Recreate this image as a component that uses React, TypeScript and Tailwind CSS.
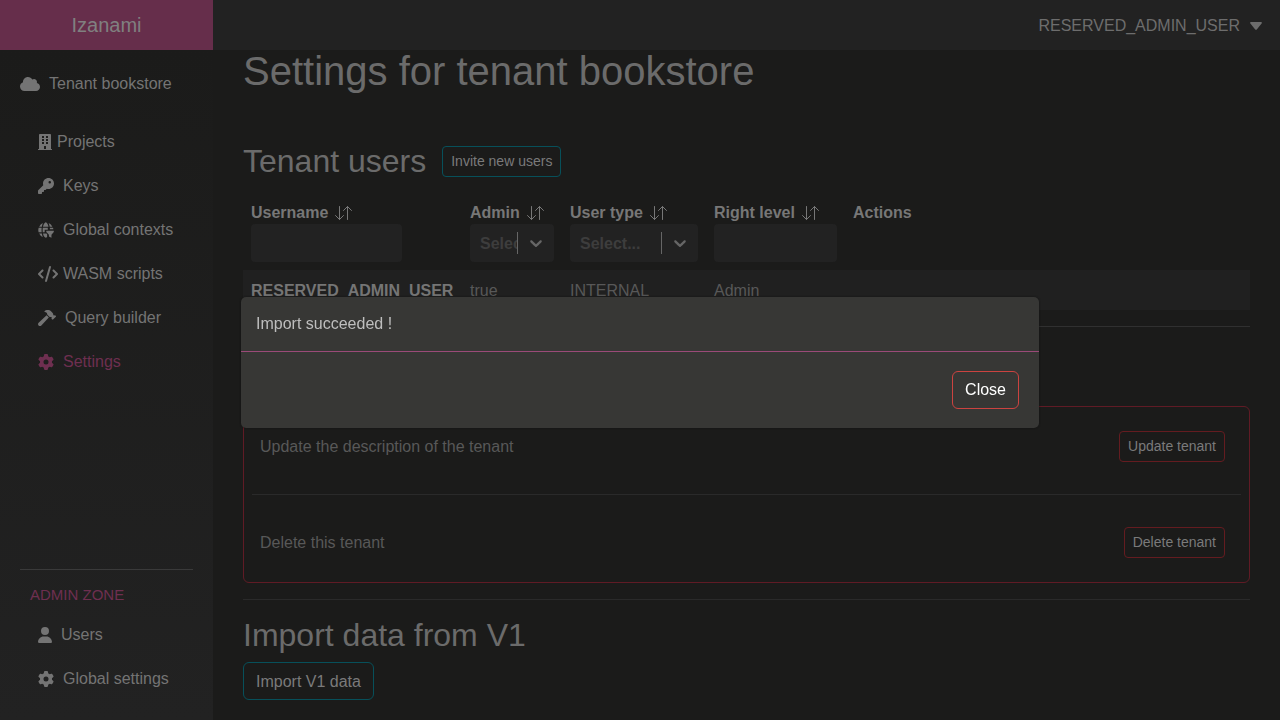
import type { ReactNode } from "react";
import { FaBuilding, FaHammer } from "react-icons/fa";
import { FaCloud, FaCode, FaGear, FaKey, FaUser } from "react-icons/fa6";

function GlobeFilterIcon() {
  return (
    <svg viewBox="0 0 17 17" width="16" height="16" fill="currentColor" aria-hidden="true">
      <path d="M5.2 1.1A8 8 0 0 0 1.2 5h2.9c.2-1.500.6-2.900 1.100-3.900zM8.300.3C7 .6 5.800 2.500 5.300 5h5.900C10.700 2.500 9.500.6 8.300.3zM11.300 1.100c.5 1 .9 2.400 1.100 3.900h2.900a8 8 0 0 0-4-3.900zM.7 6.100A8 8 0 0 0 .7 11h3.200c-.2-1.600-.2-3.300 0-4.900zM5.100 6.100c-.2 1.600-.2 3.300 0 4.900h2V8.300h3.300v-2.200zM12.600 6.100v1.500h3.700l-.3-1.500zM1.200 12.100a8 8 0 0 0 4 3.900c-.5-1-.9-2.400-1.100-3.900zM5.300 12.100c.5 2.500 1.700 4.300 3 4.600.5-.1 1-.5 1.400-1.100V13l-.8-.9z" />
      <path d="M8.800 9.200h8v1.500L14.300 13.600V16.800l-2.700-1.500v-1.700L8.800 10.700z" />
    </svg>
  );
}

function NavLink({ icon, label, tight, active }: { icon: ReactNode; label: string; tight?: boolean; active?: boolean }) {
  return (
    <a
      href="#"
      aria-current={active ? "page" : undefined}
      className={`flex h-11 items-center pl-[38px] ${tight ? "gap-[5px]" : "gap-[9px]"} ${active ? "text-[#6e2f50]" : "text-[#747474]"}`}
    >
      {icon}
      <span>{label}</span>
    </a>
  );
}

function SortHeader({ label }: { label: string }) {
  return (
    <button type="button" className="flex h-6 items-center gap-[7px] pt-px font-bold">
      {label}
      <svg viewBox="0 0 17 14" width="17" height="14" fill="none" stroke="currentColor" strokeLinecap="round" strokeLinejoin="round" role="img" aria-label="Sort">
        <path d="M4.500.5v13M.5 9.500l4 4 4-4M12.500 13.500V.5M8.500 4.500l4-4 4 4" />
      </svg>
    </button>
  );
}

function FilterSelect({ label }: { label: string }) {
  return (
    <div className="flex h-[38px] items-center rounded bg-[#222222]">
      <select aria-label={label} className="h-full min-w-0 flex-1 appearance-none overflow-hidden pt-px pl-[10px] font-bold text-[#3d3d3d] outline-none">
        <option>Select...</option>
      </select>
      <span className="h-[22px] w-px bg-[#666666]" />
      <svg viewBox="0 0 20 20" width="20" height="20" className="mx-2 fill-[#666666]" aria-hidden="true">
        <path d="M4.516 7.548c0.436-0.446 1.043-0.481 1.576 0l3.908 3.747 3.908-3.747c0.533-0.481 1.141-0.446 1.574 0 0.436 0.445 0.408 1.197 0 1.615-0.406 0.418-4.695 4.502-4.695 4.502-0.217 0.223-0.502 0.335-0.787 0.335s-0.570-0.112-0.789-0.335c0 0-4.287-4.084-4.695-4.502s-0.436-1.170 0-1.615z" />
      </svg>
    </div>
  );
}

function Sidebar() {
  return (
    <nav className="flex w-[213px] shrink-0 flex-col bg-linear-to-b from-[#1b1b1a] to-[#222222] pb-[19px]">
      <a href="#" className="mt-3 mb-[14px] flex h-11 items-center gap-[9px] pl-5 text-[#747474]">
        <FaCloud size={20} />
        <span>Tenant bookstore</span>
      </a>
      <NavLink icon={<FaBuilding size={16} className="w-[14px]" />} label="Projects" tight />
      <NavLink icon={<FaKey size={16} />} label="Keys" />
      <NavLink icon={<GlobeFilterIcon />} label="Global contexts" />
      <NavLink icon={<FaCode size={20} />} label="WASM scripts" tight />
      <NavLink icon={<FaHammer size={16} className="w-[18px]" />} label="Query builder" />
      <NavLink icon={<FaGear size={16} />} label="Settings" active />
      <div className="mt-auto">
        <hr className="mx-5 border-[#3a3a3a]" />
        <div className="flex h-[43px] items-center pt-2 pl-[30px] text-[15px] text-[#6e2f50]">ADMIN ZONE</div>
        <NavLink icon={<FaUser size={16} className="w-[14px]" />} label="Users" />
        <NavLink icon={<FaGear size={16} />} label="Global settings" />
      </div>
    </nav>
  );
}

function UsersTable() {
  return (
    <table className="mt-3 w-full table-fixed border-collapse text-left">
      <colgroup>
        <col className="w-[219px]" />
        <col className="w-[100px]" />
        <col className="w-[144px]" />
        <col className="w-[139px]" />
        <col />
      </colgroup>
      <thead>
        <tr className="align-top text-[#777777]">
          <th className="p-2">
            <SortHeader label="Username" />
            <input aria-label="Filter by username" className="block h-[38px] w-[151px] rounded bg-[#222222] px-2 outline-none" />
          </th>
          <th className="p-2">
            <SortHeader label="Admin" />
            <FilterSelect label="Filter by admin" />
          </th>
          <th className="p-2">
            <SortHeader label="User type" />
            <FilterSelect label="Filter by user type" />
          </th>
          <th className="p-2">
            <SortHeader label="Right level" />
            <input aria-label="Filter by right level" className="block h-[38px] w-full rounded bg-[#222222] px-2 outline-none" />
          </th>
          <th className="p-2 pt-[9px]">Actions</th>
        </tr>
      </thead>
      <tbody>
        <tr className="bg-[#202020] text-[#585858]">
          <td className="px-2 pt-[9px] pb-[7px] font-bold whitespace-nowrap text-[#757575]">RESERVED_ADMIN_USER</td>
          <td className="px-2 pt-[9px] pb-[7px]">true</td>
          <td className="px-2 pt-[9px] pb-[7px]">INTERNAL</td>
          <td className="px-2 pt-[9px] pb-[7px]">Admin</td>
          <td className="px-2 pt-[9px] pb-[7px]" />
        </tr>
      </tbody>
    </table>
  );
}

function DangerRow({ text, action }: { text: string; action: string }) {
  return (
    <div className="flex items-center justify-between pr-4 pl-2 text-[#585858]">
      <span>{text}</span>
      <button type="button" className="h-[31px] rounded border border-[#641c20] px-2 text-[14px] text-[#7a7a7a]">
        {action}
      </button>
    </div>
  );
}

export default function App() {
  return (
    <div className="flex h-screen flex-col overflow-hidden bg-[#1b1b1a] font-['Liberation_Sans',Arial,sans-serif] text-base text-[#6b6b6b]">
      <header className="flex h-[50px] shrink-0 bg-[#222222]">
        <a href="#" className="flex w-[213px] items-center justify-center bg-[#662e4b] text-xl text-[#808080]">
          Izanami
        </a>
        <button type="button" className="ml-auto flex items-center gap-[10px] pt-px pr-[18px] text-[#6d6d6d]">
          RESERVED_ADMIN_USER
          <svg viewBox="0 0 12 8" width="12" height="8" fill="currentColor" aria-hidden="true">
            <path d="M1.100 0h9.800c.9 0 1.300 1 .7 1.600L6.800 7.400c-.4.500-1.200.5-1.600 0L.4 1.600C-.2 1 .2 0 1.100 0z" />
          </svg>
        </button>
      </header>

      <div className="flex min-h-0 flex-1">
        <Sidebar />
        <main className="min-w-0 flex-1 overflow-hidden px-[30px]">
          <h1 className="text-[40px] leading-[42px]">Settings for tenant bookstore</h1>

          <section>
            <div className="mt-[50px] flex h-[38px] items-center gap-4">
              <h2 className="text-[32px] leading-[38px]">Tenant users</h2>
              <button type="button" className="h-[31px] rounded border border-[#07505a] px-2 text-[14px] text-[#7a7a7a]">
                Invite new users
              </button>
            </div>
            <UsersTable />
          </section>

          <hr className="my-4 border-[#303030]" />

          <section>
            <h2 className="text-[32px] leading-[38px]">Danger Zone</h2>
            <div className="mt-[25px] rounded-md border border-[#601b25] px-2 py-6">
              <DangerRow text="Update the description of the tenant" action="Update tenant" />
              <hr className="my-8 border-[#2a2a2a]" />
              <DangerRow text="Delete this tenant" action="Delete tenant" />
            </div>
          </section>

          <hr className="my-4 border-[#2a2a2a]" />

          <section>
            <h2 className="text-[32px] leading-[38px]">Import data from V1</h2>
            <button type="button" className="mt-2 h-[38px] rounded-md border border-[#07505a] px-3 pt-px text-[#7a7a7a]">
              Import V1 data
            </button>
          </section>
        </main>
      </div>

      <div className="fixed inset-0 flex items-center justify-center px-4 pt-1">
        <div role="dialog" aria-modal="true" aria-label="Import result" className="w-full max-w-[798px] rounded-[5px] bg-[#373735] shadow-[0_0_2px_#111111]">
          <div className="border-b border-[#9a4a78] p-[15px] leading-6 text-[#bebebe]">Import succeeded !</div>
          <div className="flex justify-end px-5 py-[19px]">
            <button type="button" className="h-[38px] rounded-md border border-[#cc4340] px-3 text-white">
              Close
            </button>
          </div>
        </div>
      </div>
    </div>
  );
}
